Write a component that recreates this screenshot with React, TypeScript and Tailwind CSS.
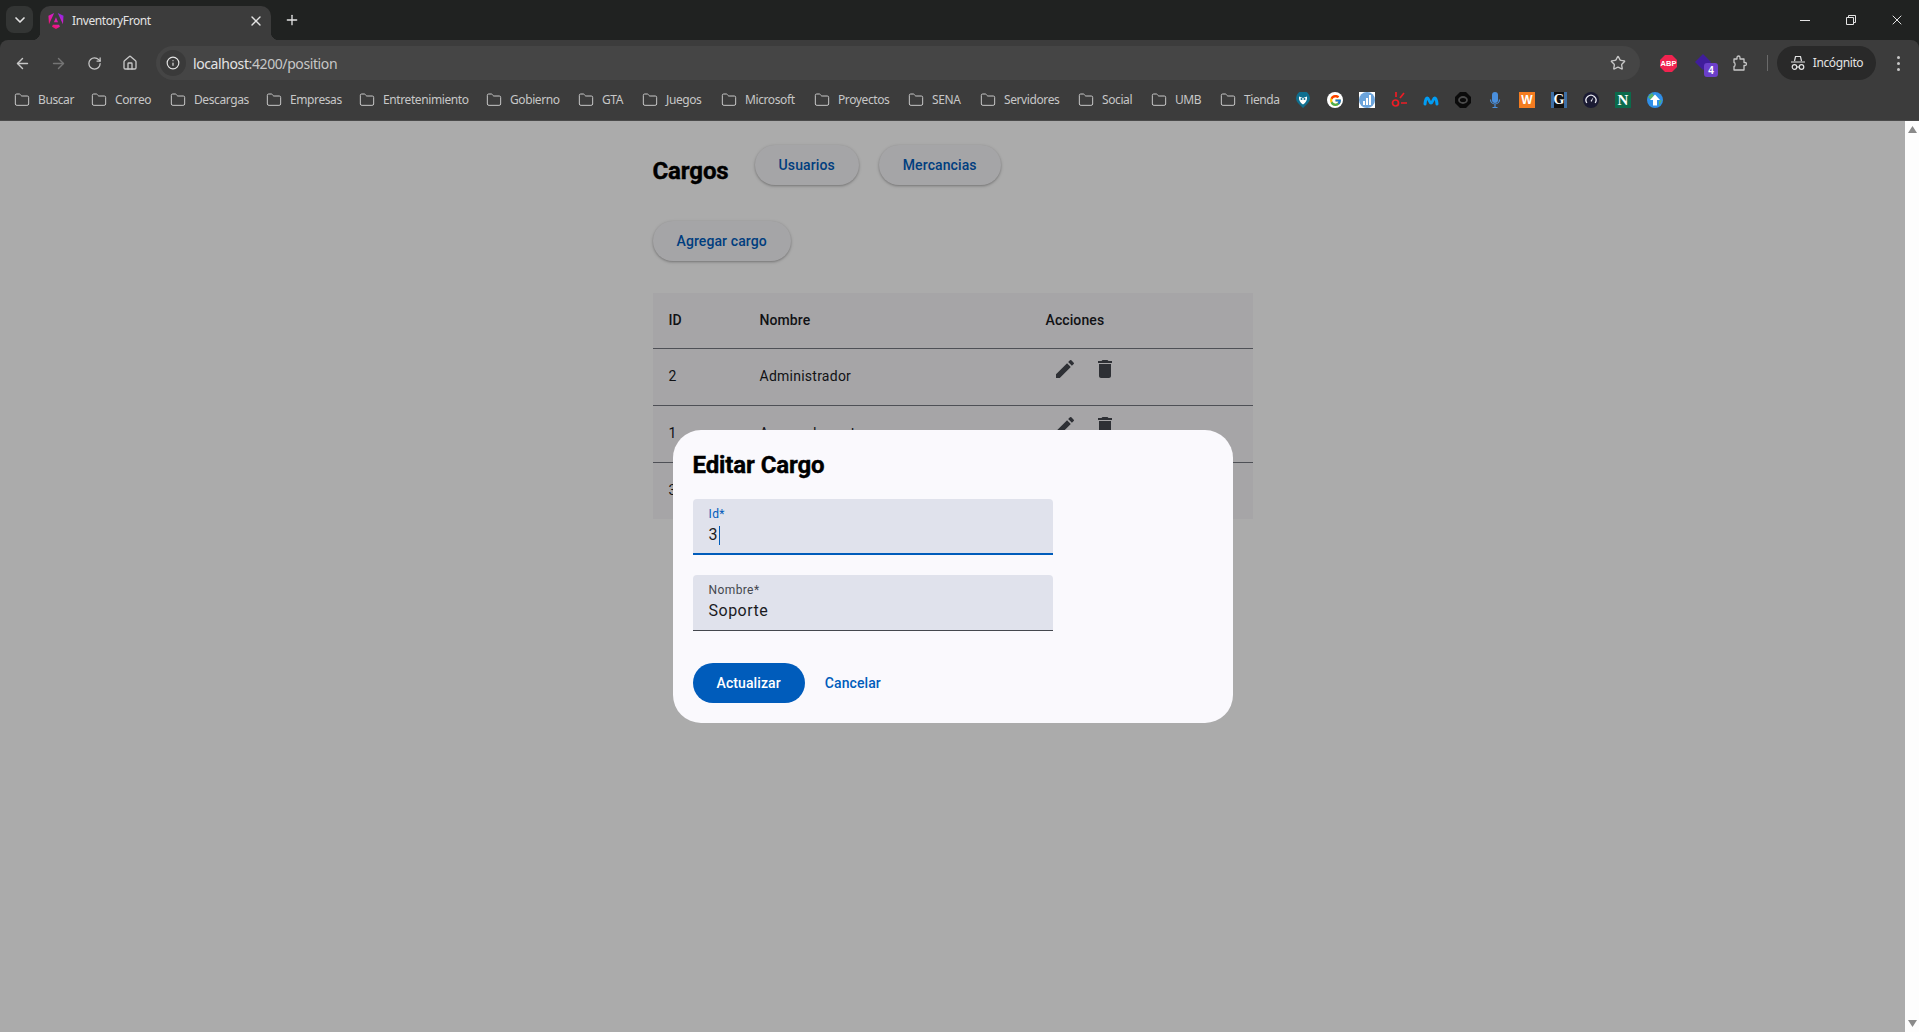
import { ArrowLeft, ArrowRight, ChevronDown, Folder, House, Info, Plus, RotateCw, Star, X } from 'lucide-react';
import { FcGoogle } from 'react-icons/fc';
import { MdDelete, MdEdit } from 'react-icons/md';

const chromeFont = "font-['Noto_Sans',sans-serif] tracking-[-0.4px]";

// Widths come from the spacing of the folders in the bar
const bookmarks = [
  { name: 'Buscar', width: 'w-[77px]' },
  { name: 'Correo', width: 'w-[79px]' },
  { name: 'Descargas', width: 'w-[96px]' },
  { name: 'Empresas', width: 'w-[93px]' },
  { name: 'Entretenimiento', width: 'w-[127px]' },
  { name: 'Gobierno', width: 'w-[92px]' },
  { name: 'GTA', width: 'w-[64px]' },
  { name: 'Juegos', width: 'w-[79px]' },
  { name: 'Microsoft', width: 'w-[93px]' },
  { name: 'Proyectos', width: 'w-[94px]' },
  { name: 'SENA', width: 'w-[72px]' },
  { name: 'Servidores', width: 'w-[98px]' },
  { name: 'Social', width: 'w-[73px]' },
  { name: 'UMB', width: 'w-[69px]' },
  { name: 'Tienda', width: 'w-[75px]' },
];

const rows = [
  { id: 2, name: 'Administrador' },
  { id: 1, name: 'Asesor de ventas' },
  { id: 3, name: 'Soporte' },
];

function AngularLogo() {
  return (
    <svg viewBox="0 0 223 236" className="h-4 w-4 shrink-0">
      <defs>
        <linearGradient id="ng" x1="0.1" y1="1" x2="0.9" y2="0">
          <stop offset="0" stopColor="#f00f4c" />
          <stop offset="0.4" stopColor="#e81aa0" />
          <stop offset="0.7" stopColor="#c81fd0" />
          <stop offset="1" stopColor="#7b2be8" />
        </linearGradient>
      </defs>
      <path
        fill="url(#ng)"
        d="M222.077 39.192l-8.019 125.923L137.387 0l84.69 39.192zm-53.105 162.825l-57.933 33.056-57.934-33.056 11.783-28.556h92.301l11.783 28.556zM111.039 62.675l30.357 73.803H80.681l30.358-73.803zM7.937 165.115L0 39.192 84.69 0 7.937 165.115z"
      />
    </svg>
  );
}

function BookmarkIcons() {
  return (
    <div className="flex items-center gap-4">
      <svg viewBox="0 0 16 16" className="h-4 w-4">
        <path fill="#0f6f8f" d="M8 16 3 11A7 7 0 1 1 13 11z" />
        <path fill="#fff" d="M4 4.500 8 6l4-1.500C12.500 8 11 10.500 8 12.500 5 10.500 3.500 8 4 4.500z" />
        <circle cx="6.500" cy="7" r="1" fill="#0f6f8f" />
        <circle cx="9.500" cy="7" r="1" fill="#0f6f8f" />
      </svg>
      <span className="flex h-4 w-4 items-center justify-center rounded-full bg-white">
        <FcGoogle className="h-[13px] w-[13px]" />
      </span>
      <svg viewBox="0 0 16 16" className="h-4 w-4">
        <rect width="16" height="16" fill="#fff" />
        <circle cx="8" cy="8" r="8" fill="#6ba4dc" />
        <path fill="#fff" d="M4 9h2v4H4zM7 6h2v7H7zM10 3h2v10h-2z" />
      </svg>
      <svg viewBox="0 0 16 16" className="h-4 w-4" fill="none" stroke="#ee1c25" strokeWidth="1.700">
        <circle cx="4.500" cy="11" r="3" />
        <path d="M5 0v5M9 6l4-5M10 11h6" />
      </svg>
      <svg viewBox="0 0 16 16" className="h-4 w-4" fill="none" stroke="#019df4" strokeWidth="3" strokeLinecap="round">
        <path d="M2 12C2.400 8 3 6 4.200 6c1.800 0 2 5 3.800 5s2-5 3.800-5c1.200 0 1.800 2 2.200 6" />
      </svg>
      <svg viewBox="0 0 16 16" className="h-4 w-4">
        <path fill="#0b0b0b" d="M5 0h6l5 5v6l-5 5H5l-5-5V5z" />
        <ellipse cx="8" cy="8" rx="4" ry="3" fill="none" stroke="#4b4b4b" strokeWidth="1.800" />
      </svg>
      <svg viewBox="0 0 16 16" className="h-4 w-4" fill="none">
        <rect x="5" y="0" width="6" height="11" rx="3" fill="#4a8fdc" />
        <path d="M3.500 7.500a4.500 4.500 0 0 0 9 0M8 12v3M5.500 15.500h5" stroke="#4a8fdc" strokeWidth="1.200" />
      </svg>
      <span className="flex h-4 w-4 items-center justify-center bg-[#f47c20] font-['Liberation_Sans',sans-serif] text-[12px] leading-none font-bold tracking-normal text-white">
        W
      </span>
      <span className="flex h-4 w-4 items-center justify-center border-x-[3px] border-[#3d6fa5] bg-[#111] font-['Liberation_Serif',serif] text-[14px] leading-none font-bold tracking-normal text-white">
        G
      </span>
      <svg viewBox="0 0 16 16" className="h-4 w-4">
        <circle cx="8" cy="8" r="8" fill="#1b1b33" />
        <path d="M3.800 11a5 5 0 1 1 8.400 0" fill="none" stroke="#e8e8f0" strokeWidth="1.300" />
        <path d="M7.500 9 10.500 5 8.700 9.700z" fill="#e8e8f0" />
      </svg>
      <span className="flex h-4 w-4 items-center justify-center bg-[#0b6b4b] font-['Liberation_Serif',serif] text-[15px] leading-none font-bold tracking-normal text-white">
        N
      </span>
      <svg viewBox="0 0 16 16" className="h-4 w-4">
        <circle cx="8" cy="8" r="8" fill="#2f8fe8" />
        <path fill="#56b26a" d="M1 5 5 1l2 3-3 4zM12 14l3-6-3 1z" />
        <path fill="#fff" d="M8 2.500 13 8h-3v5.500H6V8H3z" />
      </svg>
    </div>
  );
}

function BrowserChrome() {
  return (
    <header className={`shrink-0 ${chromeFont}`}>
      {/* Tab strip */}
      <div className="flex h-10 items-end bg-[#202221]">
        <div className="mb-[7px] ml-1.5 flex h-[27px] w-[27px] items-center justify-center rounded-lg bg-[#333534]">
          <ChevronDown className="h-4 w-4 text-[#e3e3e3]" strokeWidth={2.5} />
        </div>
        <div className="relative ml-[7px] flex h-[34px] w-[231px] items-center rounded-t-[10px] bg-[#3c3c3c] pr-[7px] pb-1 pl-2">
          <span className="absolute bottom-0 -left-2 h-2 w-2 bg-[radial-gradient(circle_at_0_0,#202221_8px,#3c3c3c_8.5px)]" />
          <span className="absolute -right-2 bottom-0 h-2 w-2 bg-[radial-gradient(circle_at_100%_0,#202221_8px,#3c3c3c_8.5px)]" />
          <AngularLogo />
          <span className="ml-2 flex-1 text-[12px] text-[#e3e3e3]">InventoryFront</span>
          <X className="h-4 w-4 text-[#e3e3e3]" strokeWidth={2} />
        </div>
        <Plus className="mb-3 ml-[13px] h-4 w-4 text-[#e3e3e3]" strokeWidth={2} />
        <div className="mb-3 ml-auto flex h-4 items-center text-[#e3e3e3]">
          <span className="mr-[35px] h-px w-[10px] bg-[#e3e3e3]" />
          <svg viewBox="0 0 12 12" className="mr-[32px] h-3 w-3" fill="none" stroke="currentColor">
            <path d="M1.500 3.500h7v7h-7zM3.500 3.500v-2h7v7h-2" />
          </svg>
          <X className="mr-[14px] h-4 w-4" strokeWidth={1.5} />
        </div>
      </div>

      {/* Toolbar */}
      <div className="rounded-t-lg border-b border-[#4a4a4a] bg-[#3c3c3c]">
        <div className="flex h-10 items-start pt-1.5 pr-[3px] pl-1">
          <div className="flex h-[34px] w-9 items-center justify-center text-[#c7c7c7]">
            <ArrowLeft className="h-[17px] w-[17px]" />
          </div>
          <div className="flex h-[34px] w-9 items-center justify-center text-[#757575]">
            <ArrowRight className="h-[17px] w-[17px]" />
          </div>
          <div className="flex h-[34px] w-9 items-center justify-center text-[#c7c7c7]">
            <RotateCw className="h-[15px] w-[15px]" />
          </div>
          <div className="flex h-[34px] w-9 items-center justify-center text-[#c7c7c7]">
            <House className="h-4 w-4" />
          </div>
          <div className="ml-2 flex h-[34px] flex-1 items-center rounded-full bg-[#454545] pr-[14px] pl-1">
            <span className="flex h-[26px] w-[26px] items-center justify-center rounded-full bg-[#3a3a3a] text-[#e3e3e3]">
              <Info className="h-[14px] w-[14px]" />
            </span>
            <span className="ml-[7px] flex-1 text-[14px] text-[#e3e3e3]">
              localhost<span className="text-[#c7c7c7]">:4200/position</span>
            </span>
            <Star className="h-4 w-4 text-[#c7c7c7]" />
          </div>
          <div className="ml-2.5 flex h-[34px] w-9 items-center justify-center">
            <svg viewBox="0 0 17 17" className="h-[17px] w-[17px]">
              <path fill="#f0234f" d="M5 0h7l5 5v7l-5 5H5l-5-5V5z" />
              <text x="8.500" y="11" textAnchor="middle" fontSize="7.500" fontWeight="700" fontFamily="Liberation Sans" letterSpacing="0" fill="#fff">
                ABP
              </text>
            </svg>
          </div>
          <div className="relative flex h-[34px] w-9 items-center justify-center">
            <svg viewBox="0 0 16 16" className="-mt-[3px] -ml-[3px] h-4 w-4">
              <path fill="#3f1d9b" d="M8 0 16 8 8 16 0 8z" />
            </svg>
            <span className="absolute top-[17px] right-[4px] flex h-[14px] w-[14px] items-center justify-center rounded-[3px] bg-[#6b3fc9] font-['Liberation_Sans',sans-serif] text-[10px] font-bold tracking-normal text-white">
              4
            </span>
          </div>
          <div className="flex h-[34px] w-9 items-center justify-center text-[#c7c7c7]">
            <svg viewBox="0 0 16 16" className="h-4 w-4" fill="none" stroke="currentColor" strokeWidth="1.300" strokeLinejoin="round">
              <path d="M2 4h3V2.500a1.500 1.500 0 0 1 3 0V4h4v3.500h1a1.500 1.500 0 0 1 0 3h-1V15H2v-3.500c1.500 0 1.500-4 0-4z" />
            </svg>
          </div>
          <span className="mt-[9px] ml-[9px] h-4 w-px bg-[#6a6a6a]" />
          <div className="ml-[9px] flex h-[34px] w-[99px] items-center justify-center gap-[7px] rounded-full bg-[#292929] text-[12px] text-[#e3e3e3]">
            <svg viewBox="0 0 16 16" className="h-4 w-4" fill="none" stroke="currentColor" strokeWidth="1.200">
              <path d="M4.500 6 5.500 1.500h5l1 4.500M1 7h14" />
              <circle cx="4.500" cy="12" r="2.300" />
              <circle cx="11.500" cy="12" r="2.300" />
              <path d="M6.800 12h2.400" />
            </svg>
            Incógnito
          </div>
          <div className="ml-1 flex h-[34px] w-9 flex-col items-center justify-center gap-[3px]">
            <span className="h-[3px] w-[3px] rounded-full bg-[#c7c7c7]" />
            <span className="h-[3px] w-[3px] rounded-full bg-[#c7c7c7]" />
            <span className="h-[3px] w-[3px] rounded-full bg-[#c7c7c7]" />
          </div>
        </div>

        {/* Bookmarks */}
        <div className="flex h-10 items-center pl-3.5">
          {bookmarks.map((b) => (
            <div key={b.name} className={`flex items-center gap-2 ${b.width}`}>
              <Folder className="h-4 w-4 shrink-0 text-[#c7c7c7]" strokeWidth={1.5} />
              <span className="text-[12px] whitespace-nowrap text-[#c7c7c7]">{b.name}</span>
            </div>
          ))}
          <BookmarkIcons />
        </div>
      </div>
    </header>
  );
}

function ElevatedButton({ label }: { label: string }) {
  return (
    <button className="h-10 rounded-full bg-[#f4f3f6] px-6 text-[14px] font-medium tracking-[0.1px] text-[#005cbb] shadow-[0_1px_2px_rgba(0,0,0,0.2),0_1px_3px_1px_rgba(0,0,0,0.1)]">
      {label}
    </button>
  );
}

function PositionPage() {
  return (
    <div className="mx-auto w-[600px] pt-6">
      <div className="flex items-start">
        <h1 className="mt-2.5 mr-[26px] -mb-0.5 text-[24px] leading-8 font-bold tracking-[-0.1px] text-black [-webkit-text-stroke:0.4px_black]">Cargos</h1>
        <ElevatedButton label="Usuarios" />
        <div className="ml-5">
          <ElevatedButton label="Mercancias" />
        </div>
      </div>
      <div className="mt-9">
        <ElevatedButton label="Agregar cargo" />
      </div>
      <table className="mt-8 w-full table-fixed border-collapse bg-[#f5f4f7] text-left text-[14px] tracking-[0.25px] text-[#1a1b1f]">
        <thead>
          <tr className="h-[55px] border-b border-[#74777f]">
            <th className="w-[91px] pl-4 font-medium tracking-[0.1px]">ID</th>
            <th className="w-[286px] pl-4 font-medium tracking-[0.1px]">Nombre</th>
            <th className="pl-4 font-medium tracking-[0.1px]">Acciones</th>
          </tr>
        </thead>
        <tbody>
          {rows.map((row, i) => (
            <tr key={row.id} className={i < rows.length - 1 ? 'h-[57px] border-b border-[#74777f]' : 'h-[57px]'}>
              <td className="pl-4">{row.id}</td>
              <td className="pl-4">{row.name}</td>
              <td className="pt-2 pl-[23px] align-top">
                <div className="flex gap-4 text-[#44474e]">
                  <MdEdit className="h-6 w-6" />
                  <MdDelete className="h-6 w-6" />
                </div>
              </td>
            </tr>
          ))}
        </tbody>
      </table>
    </div>
  );
}

function FilledField({ label, value, focused }: { label: string; value: string; focused?: boolean }) {
  return (
    <div
      className={`flex h-14 w-[360px] flex-col rounded-t-[4px] bg-[#e0e2ec] px-4 pt-[7px] ${
        focused ? 'border-b-2 border-[#005cbb]' : 'border-b border-[#44474e]'
      }`}
    >
      <span className={`text-[12px] leading-4 tracking-[0.4px] ${focused ? 'text-[#005cbb]' : 'text-[#44474e]'}`}>{label}</span>
      <div className="mt-px flex h-6 items-center text-[16px] tracking-[0.5px] text-[#1a1b1f]">
        {value}
        {focused && <span className="ml-px h-[19px] w-px bg-[#005cbb]" />}
      </div>
    </div>
  );
}

function EditDialog() {
  return (
    <div className="absolute inset-0 flex items-center justify-center bg-black/32">
      <div className="flex h-[293px] w-[560px] flex-col rounded-[28px] bg-[#faf9fd] px-5 pt-[19px]">
        <h2 className="text-[24px] leading-8 font-bold tracking-[-0.1px] text-black [-webkit-text-stroke:0.4px_black]">Editar Cargo</h2>
        <div className="mt-[18px] flex flex-col gap-5">
          <FilledField label="Id*" value="3" focused />
          <FilledField label="Nombre*" value="Soporte" />
        </div>
        <div className="mt-8 flex items-center gap-2">
          <button className="h-10 rounded-full bg-[#005cbb] px-6 text-[14px] font-medium tracking-[0.1px] text-white">Actualizar</button>
          <button className="h-10 rounded-full px-3 text-[14px] font-medium tracking-[0.1px] text-[#005cbb]">Cancelar</button>
        </div>
      </div>
    </div>
  );
}

export default function App() {
  return (
    <div className="flex h-[1032px] flex-col overflow-hidden bg-[#202221] font-['Roboto',sans-serif]">
      <BrowserChrome />
      <div className="flex min-h-0 flex-1">
        <main className="relative flex-1 bg-[#fcfcfc]">
          <PositionPage />
          <EditDialog />
        </main>
        {/* Scrollbar */}
        <div className="flex w-3.5 flex-col items-center justify-between bg-[#fdfdfd] py-[5px] text-[#8a8a8a]">
          <svg viewBox="0 0 9 7" className="h-[7px] w-[9px]" fill="currentColor">
            <path d="M4.500 0 9 7H0z" />
          </svg>
          <svg viewBox="0 0 9 7" className="h-[7px] w-[9px]" fill="currentColor">
            <path d="M0 0h9L4.500 7z" />
          </svg>
        </div>
      </div>
    </div>
  );
}
